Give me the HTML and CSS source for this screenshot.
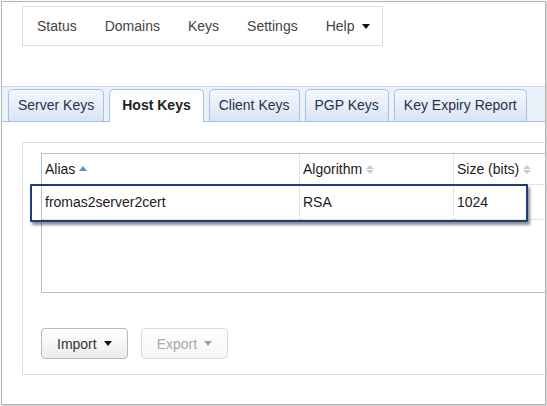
FILE: index.html
```html
<!DOCTYPE html>
<html>
<head>
<meta charset="utf-8">
<link rel="stylesheet" href="styles.css">
</head>
<body>
<div class="frame">
  <nav class="topnav">
    <a class="nav-item">Status</a>
    <a class="nav-item">Domains</a>
    <a class="nav-item">Keys</a>
    <a class="nav-item">Settings</a>
    <a class="nav-item last">Help<span class="caret"></span></a>
  </nav>
  <div class="tabstrip">
    <div class="tab">Server Keys</div>
    <div class="tab active">Host Keys</div>
    <div class="tab">Client Keys</div>
    <div class="tab">PGP Keys</div>
    <div class="tab">Key Expiry Report</div>
  </div>
  <div class="panel">
    <div class="grid-wrap">
      <table class="grid">
        <thead>
          <tr>
            <th class="col1">Alias<span class="sort-asc"></span></th>
            <th class="col2">Algorithm<span class="sort-both"><i class="up"></i><i class="down"></i></span></th>
            <th class="col3">Size (bits)<span class="sort-both"><i class="up"></i><i class="down"></i></span></th>
          </tr>
        </thead>
        <tbody>
          <tr>
            <td class="col1">fromas2server2cert</td>
            <td class="col2">RSA</td>
            <td class="col3">1024</td>
          </tr>
        </tbody>
      </table>
      <div class="highlight"></div>
    </div>
    <div class="actions">
      <button class="btn">Import<span class="caret"></span></button>
      <button class="btn disabled">Export<span class="caret"></span></button>
    </div>
  </div>
</div>
</body>
</html>
```
FILE: styles.css
```css
html, body {
  margin: 0;
  padding: 0;
  background: #fff;
}
body {
  width: 547px;
  height: 406px;
  overflow: hidden;
  font-family: "Liberation Sans", Arial, sans-serif;
  font-size: 14px;
  color: #222;
}
.frame {
  margin: 1px 0 0 1px;
  width: 545px;
  height: 404px;
  box-sizing: border-box;
  border: 1px solid #b4b4b4;
  box-shadow: 1px 1px 2px rgba(0,0,0,0.25);
  overflow: hidden;
  background: #fff;
}
.topnav {
  display: flex;
  width: max-content;
  margin: 4px 0 0 20px;
  border: 1px solid #dcdcdc;
  height: 40px;
  box-sizing: border-box;
}
.nav-item {
  padding: 0 14px;
  line-height: 38px;
  color: #444;
}
.nav-item.last {
  padding-right: 12px;
}
.caret {
  display: inline-block;
  width: 0;
  height: 0;
  border-left: 4px solid transparent;
  border-right: 4px solid transparent;
  border-top: 5px solid #111;
  margin-left: 8px;
  vertical-align: middle;
  position: relative;
  top: -1px;
}
.tabstrip {
  display: flex;
  align-items: flex-end;
  margin-top: 40px;
  height: 36px;
  box-sizing: border-box;
  padding: 2px 0 0 6px;
  border-top: 1px solid #c8d8ed;
  border-bottom: 1px solid #a9c1e0;
  background: #eaf1fb;
}
.tab {
  height: 32px;
  box-sizing: border-box;
  padding: 7px 9px 0;
  line-height: 17px;
  margin-right: 5px;
  border: 1px solid #a9c1e0;
  border-bottom: none;
  border-radius: 5px 5px 0 0;
  background: linear-gradient(#f3f7fd, #d9e5f5);
  color: #243447;
  white-space: nowrap;
}
.tab.active {
  height: 33px;
  margin-bottom: -1px;
  padding: 7px 12px 0;
  background: #fff;
  font-weight: bold;
  color: #222;
}
.panel {
  margin: 20px 0 0 20px;
  width: 600px;
  box-sizing: border-box;
  border: 1px solid #dedede;
  padding: 10px 0 15px 18px;
}
.grid-wrap {
  position: relative;
  width: 560px;
  height: 140px;
  box-sizing: border-box;
  border: 1px solid #aac2e0;
}
.grid {
  border-collapse: separate;
  border-spacing: 0;
  width: 100%;
}
.grid th, .grid td {
  text-align: left;
  font-weight: normal;
  padding: 0 3px;
  white-space: nowrap;
  color: #1a1a1a;
}
.grid th {
  height: 30px;
  border-bottom: 1px solid #e4e4e4;
}
.grid td {
  height: 34px;
  border-bottom: 1px dotted #c8c8c8;
}
.grid .col1 {
  width: 251px;
  border-right: 1px dotted #c8c8c8;
}
.grid .col2 {
  width: 147px;
  border-right: 1px dotted #c8c8c8;
}
.sort-asc {
  display: inline-block;
  width: 0;
  height: 0;
  border-left: 4px solid transparent;
  border-right: 4px solid transparent;
  border-bottom: 5px solid #5591d3;
  margin-left: 4px;
  vertical-align: middle;
  position: relative;
  top: -2px;
}
.sort-both {
  display: inline-flex;
  flex-direction: column;
  gap: 1px;
  margin-left: 4px;
  vertical-align: middle;
  position: relative;
  top: -1px;
}
.sort-both i {
  display: block;
  width: 0;
  height: 0;
  border-left: 4px solid transparent;
  border-right: 4px solid transparent;
}
.sort-both .up {
  border-bottom: 4px solid #c9c9c9;
}
.sort-both .down {
  border-top: 4px solid #c9c9c9;
}
.highlight {
  position: absolute;
  left: -12px;
  top: 30px;
  width: 498px;
  height: 38px;
  box-sizing: border-box;
  border: 2px solid #1d3c7a;
  border-radius: 1px;
  box-shadow: 2px 3px 3px rgba(0,0,0,0.45);
}
.actions {
  display: flex;
  gap: 13px;
  margin-top: 35px;
}
.btn {
  height: 31px;
  padding: 0 15px;
  border: 1px solid #b8b8b8;
  border-radius: 4px;
  background: linear-gradient(#ffffff, #ececec);
  font-family: "Liberation Sans", Arial, sans-serif;
  font-size: 14px;
  color: #333;
}
.btn.disabled {
  color: #a9a9a9;
  border-color: #dcdcdc;
  background: linear-gradient(#ffffff, #f6f6f6);
}
.btn .caret {
  margin-left: 7px;
}
.btn.disabled .caret {
  border-top-color: #a0a0a0;
}
```
